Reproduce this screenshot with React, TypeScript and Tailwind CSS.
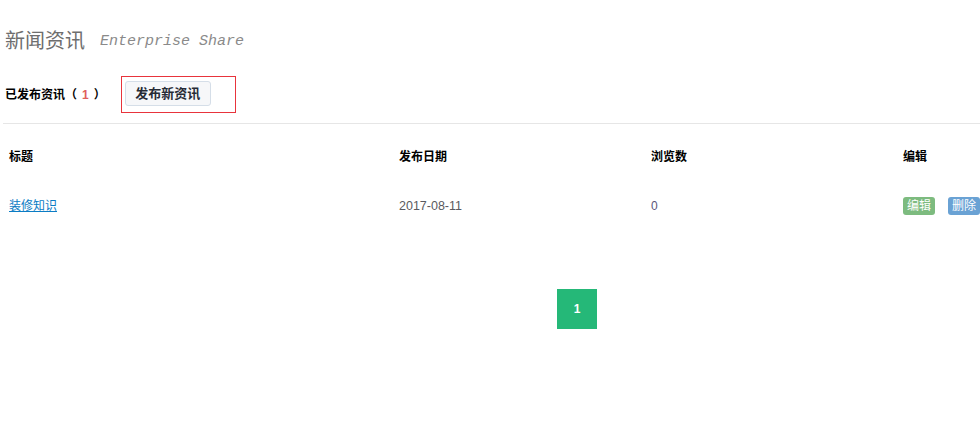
import React from 'react'

const cjk = '"Liberation Sans", "Noto Sans CJK SC", sans-serif'

const rows = [{ title: '装修知识', date: '2017-08-11', views: 0 }]

export default function App() {
  return (
    <div className="w-full h-[422px] overflow-hidden bg-white" style={{ fontFamily: cjk }}>
      <div className="w-[1154px]">
        {/* page title */}
        <div className="mt-[21px] h-[40px] pl-[5px] flex items-center">
          <span className="text-[20px] text-[#6e6e6e]">新闻资讯</span>
          <span
            className="ml-[15px] mt-[2px] text-[15px] italic text-[#8a8a8a]"
            style={{ fontFamily: '"Liberation Mono", monospace' }}
          >
            Enterprise Share
          </span>
        </div>

        {/* summary + publish button */}
        <div className="mt-[15px] h-[37px] pl-[5px] flex items-center">
          <span className="text-[12px] font-bold text-black">
            已发布资讯（<span className="mx-[5px] text-[#e0605c]">1</span>）
          </span>
          <div className="ml-[15px] w-[115px] h-[37px] border border-[#e8343c] pl-[3px] pt-[4px]">
            <button className="w-[86px] h-[25px] rounded-[3px] border border-[#d5dee8] bg-[#f6f7f9] text-[13px] font-bold text-[#262b35]">
              发布新资讯
            </button>
          </div>
        </div>

        <div className="mt-[10px] ml-[3px] border-t border-[#e6e6e6]" />

        {/* table */}
        <div className="flex h-[66px] items-center text-[12px] font-bold text-black">
          <div className="w-[399px] pl-[9px]">标题</div>
          <div className="w-[252px]">发布日期</div>
          <div className="w-[252px]">浏览数</div>
          <div>编辑</div>
        </div>
        {rows.map((r) => (
          <div key={r.title} className="flex h-[32px] items-center text-[12px]">
            <div className="w-[399px] pl-[9px]">
              <a href="#" className="text-[#0b7cc4] underline">{r.title}</a>
            </div>
            <div className="w-[252px] text-[12.5px] text-[#5a5a60]">{r.date}</div>
            <div className="w-[252px] text-[#5b5478]">{r.views}</div>
            <div className="flex gap-[13px]">
              <span className="w-[32px] h-[18px] rounded-[3px] bg-[#7dbb7f] text-white flex items-center justify-center">编辑</span>
              <span className="w-[32px] h-[18px] rounded-[3px] bg-[#6aa2d4] text-white flex items-center justify-center">删除</span>
            </div>
          </div>
        ))}

        {/* pagination */}
        <div className="mt-[67px] flex justify-center">
          <span className="w-[40px] h-[40px] bg-[#25b878] text-white text-[12px] font-bold flex items-center justify-center">
            1
          </span>
        </div>
      </div>
    </div>
  )
}
